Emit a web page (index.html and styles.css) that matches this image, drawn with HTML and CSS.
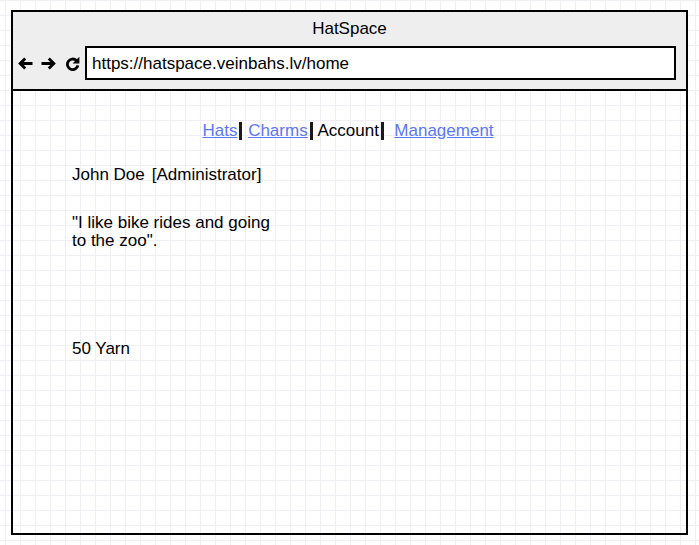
FILE: index.html
```html
<!DOCTYPE html>
<html>
<head>
<meta charset="utf-8">
<link rel="stylesheet" href="styles.css">
</head>
<body>
<div class="window">
  <div class="chrome">
    <div class="title">HatSpace</div>
    <div class="toolbar">
      <svg class="icon" width="15" height="13" viewBox="0 0 15 13"><path d="M7.2 1.5 L2.2 6.5 L7.2 11.5 M2.8 6.5 H14.5" fill="none" stroke="#000" stroke-width="2.9"/></svg>
      <svg class="icon" width="15" height="13" viewBox="0 0 15 13"><path d="M7.8 1.5 L12.8 6.5 L7.8 11.5 M12.2 6.5 H0.5" fill="none" stroke="#000" stroke-width="2.9"/></svg>
      <svg class="icon reload" width="15" height="15" viewBox="0 0 15 15"><path d="M11.3 4.4 A5.3 5.3 0 1 0 12.9 9.4" fill="none" stroke="#000" stroke-width="2.8"/><path d="M14.4 0.8 V7.6 H7.6 Z" fill="#000"/></svg>
      <div class="url">https://hatspace.veinbahs.lv/home</div>
    </div>
  </div>
  <div class="page">
    <nav class="nav"><a href="#">Hats</a><span class="sep"></span> <a href="#">Charms</a><span class="sep"></span> Account<span class="sep"></span>&nbsp; <a href="#">Management</a></nav>
    <div class="user"><span class="name">John Doe</span><span class="role">[Administrator]</span></div>
    <p class="bio">"I like bike rides and going<br>to the zoo".</p>
    <p class="yarn">50 Yarn</p>
  </div>
</div>
</body>
</html>
```
FILE: styles.css
```css
html, body {
  margin: 0;
  padding: 0;
}
body {
  width: 699px;
  height: 545px;
  font-family: "Liberation Sans", Arial, sans-serif;
  font-size: 17px;
  color: #000;
  background-color: #fff;
  background-image:
    linear-gradient(to right, #eeeef4 1px, transparent 1px),
    linear-gradient(to bottom, #eeeef4 1px, transparent 1px);
  background-size: 15px 15px;
  background-position: 5px 0;
  overflow: hidden;
}
.window {
  box-sizing: border-box;
  margin: 10px 0 0 11px;
  width: 677px;
  height: 525px;
  border: 2px solid #000;
  display: flex;
  flex-direction: column;
}
.chrome {
  box-sizing: border-box;
  background: #eeeeee;
  border-bottom: 2px solid #000;
  height: 79px;
  display: flex;
  flex-direction: column;
}
.title {
  text-align: center;
  height: 34px;
  line-height: 33px;
}
.toolbar {
  display: flex;
  align-items: center;
  padding-left: 5px;
  height: 34px;
}
.icon {
  margin-right: 8px;
  flex: none;
}
.icon.reload {
  margin-right: 5px;
  margin-left: 1px;
}
.url {
  box-sizing: border-box;
  width: 591px;
  height: 34px;
  border: 2px solid #000;
  background: #fff;
  padding-left: 5px;
  line-height: 31px;
}
.page {
  flex: 1;
  padding: 0 0 0 59px;
}
.nav {
  margin: 28px 0 0 -62px;
  text-align: center;
  line-height: 24px;
}
.nav a {
  color: #5a78f0;
  text-decoration: underline;
}
.sep {
  display: inline-block;
  width: 3px;
  height: 18px;
  background: #1c1a18;
  vertical-align: -4px;
  margin: 0 1px 0 2px;
}
.user {
  margin-top: 20px;
  line-height: 24px;
}
.role {
  margin-left: 7px;
}
.bio {
  margin: 27px 0 0;
  line-height: 18px;
}
.yarn {
  margin: 87px 0 0;
  line-height: 24px;
}
```
